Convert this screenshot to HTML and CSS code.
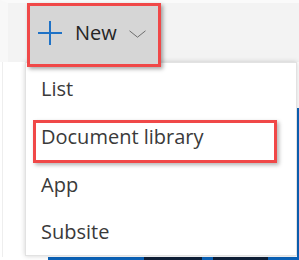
FILE: index.html
```html
<!DOCTYPE html>
<html>
<head>
<meta charset="utf-8">
<link rel="stylesheet" href="styles.css">
</head>
<body>
<div class="app">
  <div class="toolbar">
    <button class="new-btn">
      <svg class="plus" width="24" height="24" viewBox="0 0 24 24"><path d="M12 0V24M0 12H24" stroke="#1f72c6" stroke-width="2" fill="none"/></svg>
      <span class="label">New</span>
      <svg class="chev" width="17" height="8" viewBox="0 0 17 8"><path d="M0.5 0.8L8.5 7.2L16.5 0.8" fill="none" stroke="#6e6e6e" stroke-width="1"/></svg>
    </button>
  </div>
  <div class="content">
    <div class="main"></div>
    <div class="edge"></div>
    <div class="strip">
      <span class="seg blank" style="width:48px"></span>
      <span class="seg blue" style="width:97px"></span>
      <span class="seg navy" style="width:58px"></span>
      <span class="seg blue" style="width:11px"></span>
      <span class="seg navy" style="width:56px"></span>
      <span class="seg blue" style="width:29px"></span>
    </div>
  </div>
  <ul class="menu">
    <li class="item">List</li>
    <li class="item">Document library</li>
    <li class="item">App</li>
    <li class="item last">Subsite</li>
    <li class="callout"></li>
  </ul>
</div>
</body>
</html>
```

FILE: styles.css
```css
* { box-sizing: border-box; }
html, body { margin: 0; padding: 0; }
body {
  width: 299px;
  height: 260px;
  overflow: hidden;
  background: #ffffff;
  font-family: "Open Sans", "Noto Sans", "Liberation Sans", sans-serif;
}
.app {
  position: relative;
  width: 299px;
  height: 260px;
}
.toolbar {
  height: 62px;
  background: #f3f3f3;
  border-top: 3px solid #fafafa;
  border-left: 8px solid #f8f8f8;
  display: flex;
  align-items: flex-start;
}
.new-btn {
  position: relative;
  z-index: 3;
  margin-left: 19px;
  width: 134px;
  height: 64px;
  border: 3px solid #f04848;
  background: #d6d6d6;
  box-shadow: 2px 2px 4px rgba(0, 0, 0, 0.35);
  display: flex;
  align-items: center;
  padding: 0 0 4px 8px;
  font-family: inherit;
  cursor: pointer;
}
.plus { display: block; flex: none; }
.label {
  margin-left: 13px;
  font-size: 20px;
  color: #252525;
  line-height: 24px;
}
.chev { display: block; flex: none; margin-left: 12px; margin-top: 2px; }
.content {
  height: 198px;
  display: grid;
  grid-template-columns: 297px 2px;
  grid-template-rows: 46px 1fr 3px;
}
.main {
  grid-column: 1;
  grid-row: 1 / 3;
  border-left: 1px solid #eeeeee;
  margin-left: 2px;
}
.edge {
  grid-column: 2;
  grid-row: 2 / 4;
  background: #0b63b9;
}
.strip {
  grid-column: 1;
  grid-row: 3;
  display: flex;
}
.seg { display: block; height: 3px; }
.blank { background: #ffffff; }
.blue { background: #0b63b9; }
.navy { background: #0f2038; }
.menu {
  position: absolute;
  z-index: 2;
  left: 25px;
  top: 62px;
  width: 272px;
  margin: 0;
  padding: 2px 0 0 0;
  list-style: none;
  background: #ffffff;
  border: 1px solid #e2e2e2;
  box-shadow: 0 0 5px rgba(0, 0, 0, 0.18);
}
.item {
  height: 48px;
  line-height: 48px;
  padding-left: 15px;
  font-size: 20px;
  color: #3a3a3a;
}
.item.last { height: 46px; line-height: 46px; padding-bottom: 0; }
.callout {
  position: absolute;
  left: 7px;
  top: 57px;
  width: 244px;
  height: 43px;
  border: 3px solid #f04848;
  box-shadow: 2px 2px 4px rgba(0, 0, 0, 0.3);
}
```
